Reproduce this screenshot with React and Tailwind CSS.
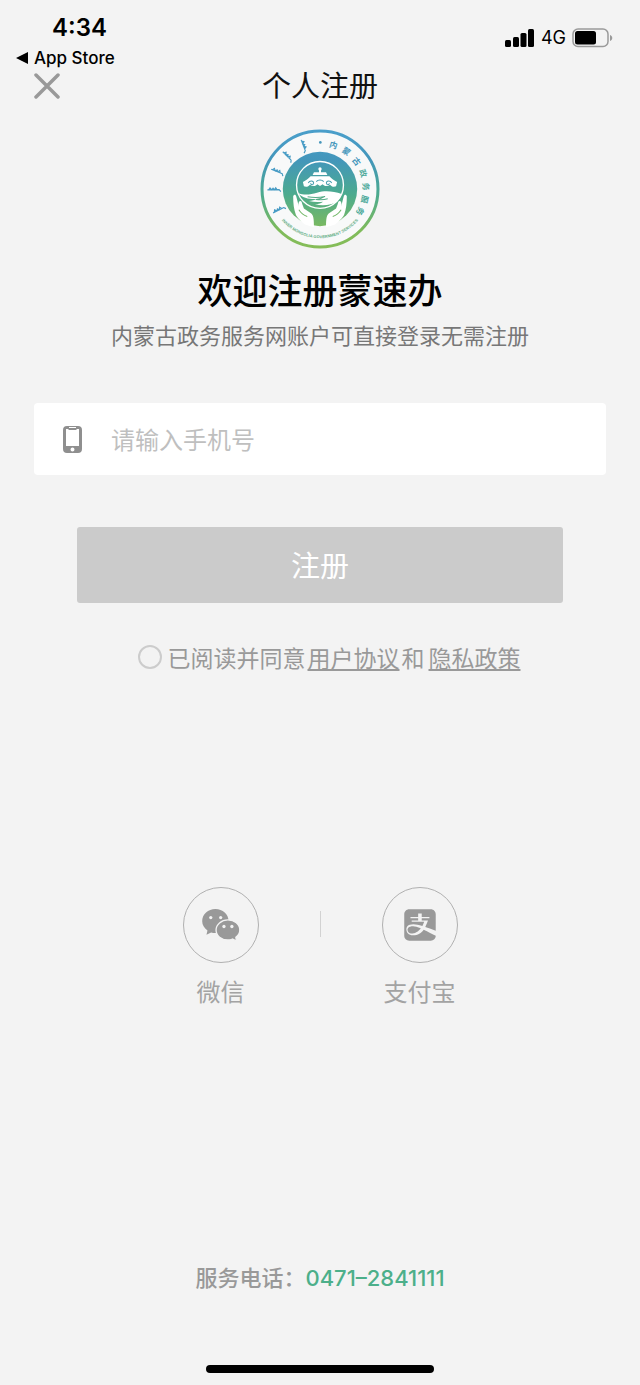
import React, { useState } from 'react';
import { FaAlipay } from 'react-icons/fa';

const ringChars = [
  { char: '内', angle: 17 },
  { char: '蒙', angle: 35 },
  { char: '古', angle: 53 },
  { char: '政', angle: 70 },
  { char: '务', angle: 87 },
  { char: '服', angle: 103 },
  { char: '务', angle: 119 },
];

const scriptMarks = [-21, -45, -68, -91, -117];

const StatusBar = () => (
  <div className="flex justify-between items-start h-[68px] pl-4 pr-[27px] font-['Inter',sans-serif] text-black">
    <div className="pt-3">
      <div className="pl-9 text-2xl leading-8 font-semibold">4:34</div>
      <a href="#app-store" className="flex items-center gap-1.5 text-[17px] leading-7 font-medium">
        <svg viewBox="0 0 11 11" className="w-3 h-3" aria-hidden="true">
          <path d="M0 5.5 11 0v11z" fill="currentColor" />
        </svg>
        App Store
      </a>
    </div>
    <div className="flex items-center gap-1.5 pt-6">
      <svg viewBox="0 0 30 18" className="w-[30px] h-[18px]" aria-hidden="true">
        <rect x="0" y="11" width="6" height="7" rx="1.5" />
        <rect x="8" y="8" width="6" height="10" rx="1.5" />
        <rect x="15.5" y="4" width="6" height="14" rx="1.5" />
        <rect x="23" y="0" width="6" height="18" rx="1.5" />
      </svg>
      <span className="text-lg leading-7">4G</span>
      <svg viewBox="0 0 41 20" className="w-[41px] h-5" aria-hidden="true">
        <rect x="1" y="1" width="35" height="17.5" rx="5" fill="none" stroke="#9a9a9a" strokeWidth="1.5" />
        <rect x="3" y="3" width="21" height="13.5" rx="2.5" />
        <path d="M38 7c3 1 3 5 0 6z" fill="#9a9a9a" />
      </svg>
    </div>
  </div>
);

const Logo = () => (
  <svg viewBox="16 17 358 358" className="w-[120px] h-[120px]" role="img" aria-label="内蒙古政务服务">
    <defs>
      <linearGradient id="brand" gradientUnits="userSpaceOnUse" x1="0" y1="20" x2="0" y2="372">
        <stop offset="0" stopColor="#4a9fcb" />
        <stop offset="0.25" stopColor="#4396bb" />
        <stop offset="0.55" stopColor="#4cab8e" />
        <stop offset="0.85" stopColor="#7fbb5b" />
        <stop offset="1" stopColor="#86bd58" />
      </linearGradient>
      <path id="ring-bottom" d="M49 219A148 148 0 0 0 341 219" />
    </defs>
    <circle cx="195" cy="196" r="173" fill="#f8f9f9" stroke="url(#brand)" strokeWidth="9" />
    <circle cx="195" cy="196" r="111" fill="url(#brand)" />

    {/* tent above the waves */}
    <circle cx="195" cy="184" r="70" fill="none" stroke="#fff" strokeWidth="4" />
    <circle cx="195" cy="136" r="5" fill="#fff" />
    <path d="M192 139h6v7h15l4 8h-44l4-8h15z" fill="#fff" />
    <path d="M167 158h56c7 8 14 13 23 17l-3 13c-8 3-14 0-18-5-8 6-17 6-22-1l-8 5-8-5c-5 7-14 7-22 1-4 5-10 8-18 5l-3-13c9-4 16-9 23-17z" fill="#fff" />
    <path d="M160 178c4-8 16-7 16 0 0 6-9 6-9 1M230 178c-4-8-16-7-16 0 0 6 9 6 9 1M184 174c5-6 17-6 22 0" fill="none" stroke="#4a9fb0" strokeWidth="3" />
    <path d="M128 207c22 10 38 5 58 0 26-7 48-4 74 4-4 9-8 15-14 22-16 11-44 15-66 8 12 0 19-3 24-7-16 2-29 1-42-2 10-1 17-3 22-6-19 1-42-3-56-19z" fill="#fff" />
    <path d="M158 219c20 4 36 3 52-1-10 7-18 8-27 9 14 2 25 1 35-2" fill="none" stroke="#55ab86" strokeWidth="3" />

    {/* hands */}
    <path d="M115 218c1-6 8-7 9 0l8 30c-2-8-1-14 3-16 4-1 6 3 7 9l5 13 21 14c7 6 9 14 9 42l-27-8c-15-12-22-19-27-29-6-16-8-33-8-55z" fill="#fff" />
    <path d="M275 218c-1-6-8-7-9 0l-8 30c2-8 1-14-3-16-4-1-6 3-7 9l-5 13-21 14c-7 6-9 14-9 42l27-8c15-12 22-19 27-29 6-16 8-33 8-55z" fill="#fff" />
    <path d="M132 258c6 10 13 16 25 20M258 258c-6 10-13 16-25 20" fill="none" stroke="#72b767" strokeWidth="3" />

    {scriptMarks.map((angle) => (
      <g key={angle} transform={`rotate(${angle} 195 196)`}>
        <path
          d="M195 39v36M195 43l6 4-6 5 5 4-5 4 6 4-6 4M195 74l-6 5"
          fill="none"
          stroke="url(#brand)"
          strokeWidth="3.5"
        />
      </g>
    ))}
    <circle cx="196" cy="57" r="4" fill="#4797bb" />
    {ringChars.map(({ char, angle }) => (
      <text
        key={angle}
        x="195"
        y="68"
        textAnchor="middle"
        transform={`rotate(${angle} 195 196)`}
        fill={angle < 60 ? '#4396bb' : '#4ca99a'}
        className="font-['Noto_Sans_CJK_SC',sans-serif] text-[24px] font-bold"
      >
        {char}
      </text>
    ))}
    <text fill="#62ad85" textAnchor="middle" className="font-['Liberation_Sans',sans-serif] text-[12px] font-bold">
      <textPath href="#ring-bottom" startOffset="50%">INNER MONGOLIA GOVERNMENT SERVICES</textPath>
    </text>
  </svg>
);

const PhoneIcon = () => (
  <svg viewBox="0 0 19 27" className="w-[19px] h-[27px]" aria-hidden="true">
    <path
      fill="#8f8f8f"
      fillRule="evenodd"
      d="M4 0h11a4 4 0 0 1 4 4v19a4 4 0 0 1-4 4H4a4 4 0 0 1-4-4V4a4 4 0 0 1 4-4zM3 3v17h13V3h-2l-1 1H6L5 3zM9.5 21.500a2 2 0 1 0 0 4 2 2 0 0 0 0-4z"
    />
    <path d="M6 1.5h7" stroke="#fff" />
  </svg>
);

const WechatIcon = () => (
  <svg viewBox="0 0 114 97" className="w-[38px] h-8" aria-hidden="true">
    <path d="M40 0c22 0 40 16 40 37S62 73 40 73c-5 0-9-1-13-2L13 78l3-13C6 58 0 48 0 37 0 16 18 0 40 0z" fill="#999" />
    <path
      d="M78 33c20 0 36 13 36 31 0 9-5 17-12 22l2 11-12-6c-4 2-9 3-14 3-20 0-36-13-36-30s16-31 36-31z"
      fill="#999"
      stroke="#f3f3f3"
      strokeWidth="4"
    />
    <g fill="#f3f3f3">
      <circle cx="26" cy="26" r="5" />
      <circle cx="56" cy="26" r="5" />
      <circle cx="66" cy="53" r="5" />
      <circle cx="90" cy="53" r="5" />
    </g>
  </svg>
);

const SocialButton = ({ label, children }) => (
  <button type="button" className="flex flex-col items-center gap-2.5 w-20 text-2xl leading-9 text-[#a3a3a3] whitespace-nowrap">
    <span className="flex items-center justify-center w-[76px] h-[76px] rounded-full border border-[#b0b0b0]">
      {children}
    </span>
    {label}
  </button>
);

const App = () => {
  const [phone, setPhone] = useState('');
  const [agreed, setAgreed] = useState(false);

  return (
    <div className="flex flex-col min-h-screen bg-[#f3f3f3] font-['Noto_Sans_CJK_SC',sans-serif]">
      <StatusBar />

      <header className="grid grid-cols-[1fr_auto_1fr] items-center h-9 px-[34px]">
        <button type="button" aria-label="关闭" className="w-[26px] h-[26px]">
          <svg viewBox="0 0 26 26" className="w-full h-full">
            <path d="M2 2l22 22M24 2L2 24" stroke="#999" strokeWidth="3.5" strokeLinecap="round" />
          </svg>
        </button>
        <h1 className="pb-1 text-[29px] leading-8 text-[#111]">个人注册</h1>
      </header>

      <main className="flex flex-col pt-[25px] px-[34px]">
        <div className="flex flex-col items-center">
          <Logo />
          <h2 className="mt-[18px] text-[35px] leading-[44px] font-medium text-black">欢迎注册蒙速办</h2>
          <p className="mt-2 text-[22px] leading-[30px] text-[#777]">内蒙古政务服务网账户可直接登录无需注册</p>
        </div>

        <label className="flex items-center mt-[54px] h-[72px] pl-[29px] pr-6 gap-[29px] rounded-[4px] bg-white">
          <PhoneIcon />
          <input
            type="tel"
            aria-label="手机号"
            placeholder="请输入手机号"
            value={phone}
            onChange={(e) => setPhone(e.target.value)}
            className="flex-1 min-w-0 text-2xl leading-9 text-[#333] placeholder:text-[#bfbfbf] outline-none"
          />
        </label>

        <button type="button" className="mt-[52px] mx-[43px] h-[76px] rounded-[3px] bg-[#cbcbcb] text-[29px] text-white">
          注册
        </button>

        <div className="flex items-center justify-center mt-[38px] pl-[18px] text-[23px] leading-8 text-[#999]">
          <input
            id="agree"
            type="checkbox"
            checked={agreed}
            onChange={(e) => setAgreed(e.target.checked)}
            className="appearance-none w-6 h-6 mr-1.5 rounded-full border-2 border-[#ccc] checked:bg-[#4caf8a]"
          />
          <label htmlFor="agree">已阅读并同意</label>
          <a href="#terms" className="ml-0.5 underline underline-offset-2 decoration-2">用户协议</a>
          <span className="mx-0.5">和</span>
          <a href="#privacy" className="ml-0.5 underline underline-offset-2 decoration-2">隐私政策</a>
        </div>
      </main>

      <div className="flex justify-center mt-[214px]">
        <SocialButton label="微信">
          <WechatIcon />
        </SocialButton>
        <div className="mx-[59px] mt-6 w-px h-[26px] bg-[#d2d2d2]" />
        <SocialButton label="支付宝">
          <FaAlipay className="w-8 h-9 text-[#999]" />
        </SocialButton>
      </div>

      <footer className="flex flex-col items-center mt-auto pb-3">
        <p className="text-[22px] leading-8 font-medium text-[#999]">
          服务电话：
          <a href="tel:0471-2841111" className="font-['Inter',sans-serif] text-[#4caf8a]">0471–2841111</a>
        </p>
        <div className="mt-[71px] w-[228px] h-2 rounded-full bg-black" />
      </footer>
    </div>
  );
};

export default App;
